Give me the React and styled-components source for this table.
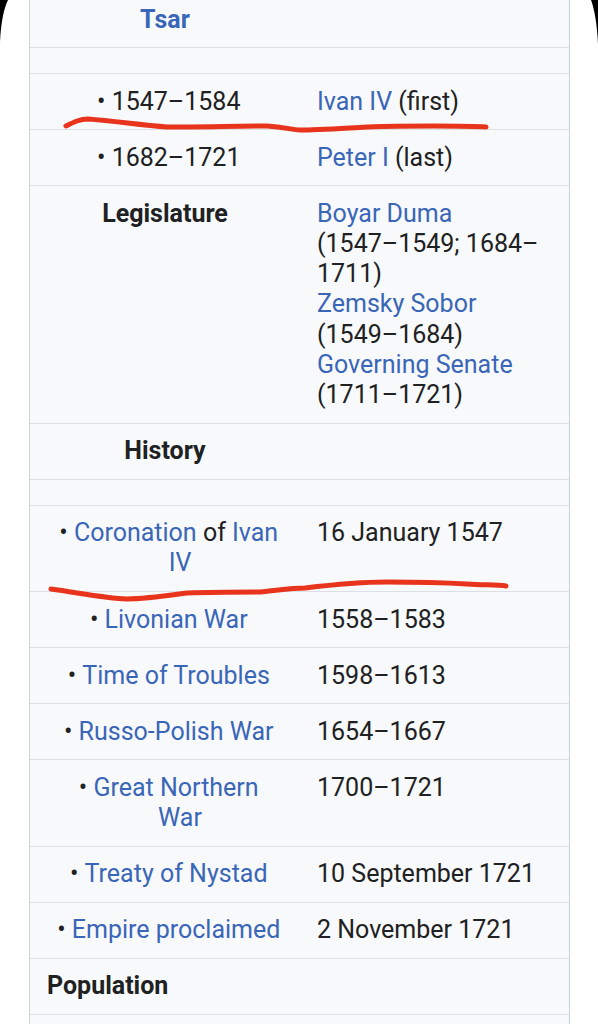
import React from "react";
import styled, { createGlobalStyle } from "styled-components";

const GlobalStyle = createGlobalStyle`
  html, body {
    margin: 0;
    padding: 0;
    background: #fff;
  }
  body {
    font-family: Roboto, "Noto Sans", "Liberation Sans", sans-serif;
    color: #202122;
    overflow: hidden;
  }
`;

const Screen = styled.div`
  position: relative;
  width: 598px;
  height: 1024px;
  overflow: hidden;
  background: #fff;
`;

const Infobox = styled.div`
  margin: -7.8px 0 0 29px;
  width: 539px;
  border-left: 1px solid #cfd3d8;
  border-right: 1px solid #cfd3d8;
  background: #f8f9fa;
  font-size: 25px;
  line-height: 30.2px;
`;

const Row = styled.div`
  display: grid;
  grid-template-columns: 270px 1fr;
  min-height: ${p => (p.$spacer ? "25px" : p.$tail ? "60px" : "0")};
  border-bottom: 1px solid #dcdfe4;
`;

const Label = styled.div`
  padding: 12.45px 19px;
  text-align: center;
  font-weight: 700;
`;

const SubLabel = styled.div`
  margin-left: 30px;
  text-indent: -22.5px;
  font-weight: 400;
`;

const Value = styled.div`
  padding: 12.45px 11px 12.45px 17px;
`;

const Header = styled.div`
  grid-column: 1 / -1;
  padding: 12.45px 17px;
  text-align: left;
  font-weight: 700;
`;

const Link = styled.a`
  color: #3a66b8;
  text-decoration: none;
`;

const Overlay = styled.svg`
  position: absolute;
  left: 0;
  top: 0;
  width: 598px;
  height: 1024px;
  pointer-events: none;
`;

const Bullet = ({ children }) => (
  <SubLabel>
    {"\u2022\u00a0"}
    {children}
  </SubLabel>
);

const events = [
  { name: "Livonian War", date: "1558\u20131583" },
  { name: "Time of Troubles", date: "1598\u20131613" },
  { name: "Russo-Polish War", date: "1654\u20131667" },
  { name: "Great Northern War", date: "1700\u20131721" },
  { name: "Treaty of Nystad", date: "10 September 1721" },
  { name: "Empire proclaimed", date: "2 November 1721" },
];

export default function App() {
  return (
    <Screen>
      <GlobalStyle />
      <Infobox>
        <Row>
          <Label>
            <Link href="#">Tsar</Link>
          </Label>
          <Value />
        </Row>
        <Row $spacer>
          <div />
          <div />
        </Row>
        <Row>
          <Label>
            <Bullet>1547–1584</Bullet>
          </Label>
          <Value>
            <Link href="#">Ivan IV</Link> (first)
          </Value>
        </Row>
        <Row>
          <Label>
            <Bullet>1682–1721</Bullet>
          </Label>
          <Value>
            <Link href="#">Peter I</Link> (last)
          </Value>
        </Row>
        <Row>
          <Label>Legislature</Label>
          <Value>
            <Link href="#">Boyar Duma</Link>
            <br />
            (1547–1549; 1684–1711)
            <br />
            <Link href="#">Zemsky Sobor</Link>
            <br />
            (1549–1684)
            <br />
            <Link href="#">Governing Senate</Link>
            <br />
            (1711–1721)
          </Value>
        </Row>
        <Row>
          <Label>History</Label>
          <Value />
        </Row>
        <Row $spacer>
          <div />
          <div />
        </Row>
        <Row>
          <Label>
            <Bullet>
              <Link href="#">Coronation</Link> of <Link href="#">Ivan IV</Link>
            </Bullet>
          </Label>
          <Value>16 January 1547</Value>
        </Row>
        {events.map(e => (
          <Row key={e.name}>
            <Label>
              <Bullet>
                <Link href="#">{e.name}</Link>
              </Bullet>
            </Label>
            <Value>{e.date}</Value>
          </Row>
        ))}
        <Row>
          <Header>Population</Header>
        </Row>
        <Row $tail>
          <div />
          <div />
        </Row>
      </Infobox>

      <Overlay viewBox="0 0 598 1024">
        <path d="M0,0 H8 C4,8 1,22 0,42 Z" fill="#000" />
        <path d="M598,0 H591 C594,8 597,22 598,44 Z" fill="#000" />
        <path
          d="M66,126 C74,122 80,119 88,119 C115,121 140,125 167,127 C200,127 240,126 267,126 C285,127 292,130 300,130 C315,130 330,129 367,127 C395,126 420,126 433,126 C455,126 472,126 486,127"
          fill="none"
          stroke="#e8331d"
          strokeWidth="5"
          strokeLinecap="round"
        />
        <path
          d="M51,589 C80,593 105,598 127,599 C145,599 165,596 187,593 C215,592 240,592 260,592 C280,590 292,588 305,588 C330,585 360,582 387,582 C420,582 450,583 467,584 C485,585 498,585 506,586"
          fill="none"
          stroke="#e8331d"
          strokeWidth="5"
          strokeLinecap="round"
        />
      </Overlay>
    </Screen>
  );
}
